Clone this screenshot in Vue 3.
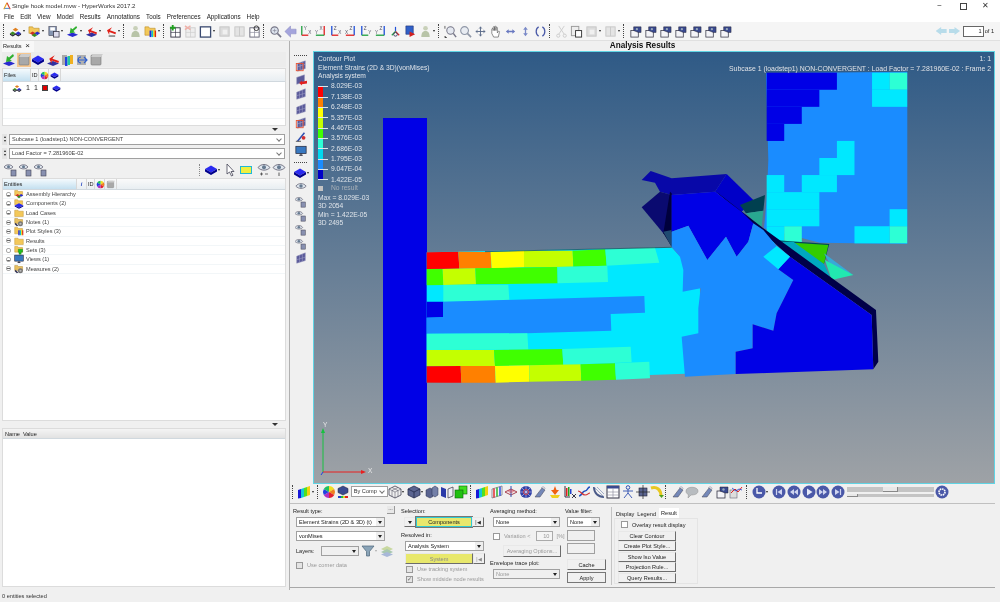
<script setup>
const menus = ['File', 'Edit', 'View', 'Model', 'Results', 'Annotations', 'Tools', 'Preferences', 'Applications', 'Help']

const GRN = '#20a040', RED = '#e02020', BLU = '#2050d8'

// axis view buttons: line colours, their labels, and whether the upright sits on the right
const ax = (up, flat, a, b, flip) => ({ up, flat, a, b, flip })

// '|' = grip dots, '^' = small dropdown caret, '_' = spacer, objects = axis buttons, other strings = symbol ids
const topTools = ['|', 'model', '^', 'folderm', '^', 'save', '^', 'greenarr', '^', 'redarr', '^', 'pptarr', '^', '|',
  'person', 'folderrb', '^', '|', 'plusw', 'crossw', 'squarew', '^', 'grey1', 'grey2', 'pagew', '|',
  'mag', 'leftarr',
  ax(GRN, RED, 'Y', 'X', false), ax(RED, GRN, 'X', 'Y', true), ax(BLU, RED, 'Z', 'X', false),
  ax(BLU, RED, 'Z', 'X', true), ax(BLU, GRN, 'Z', 'Y', false), ax(BLU, GRN, 'Z', 'Y', true),
  'triad', 'book', 'person', '^', '|',
  'magm', 'mag2', 'cross', 'hand', 'hsplit', 'vsplit', 'rotate', '|', 'scissors', 'paste', 'grey1', '^', 'grey2', '^', '|',
  'cam', 'cam', 'cam', 'cam', 'cam', 'cam', 'cam']

const sideTools = ['meshr', 'mesharr', 'mesh', 'mesh', 'meshr', 'stick', 'monitor']
const sideEyes = ['eye', 'eyebox', 'eyebox', 'eyebox', 'eyebox', 'mesh']

const bottomTools = ['|', 'rainbow', '^', '|', 'wheel', 'cubebar']
const bottomTools2 = ['wire', '^', 'solid', '^', 'solid2', 'half', 'greens', '|',
  'rainbow', 'rainframe', 'disk', 'net', 'stroke', 'ybar', 'chart', 'run', 'dish', 'table', 'figure', 'moveb', 'yellowarr', '|',
  'stroke', 'bubble', 'stroke', 'cam', 'graph', '_', '|', 'rbclock', '^', '_', 'rbfirst', 'rbback', 'rbplay', 'rbfwd', 'rblast']

const files = [{ icon: 'model', id: 1 }]

const leftIcons = ['greenarr', 'grey3', 'cube', 'redarr', 'rainbox', 'netbox', 'grey3']

const tree = [
  { label: 'Assembly Hierarchy', icon: 'folderm' },
  { label: 'Components (2)', icon: 'cubefolder' },
  { label: 'Load Cases', icon: 'folder' },
  { label: 'Notes (1)', icon: 'notes' },
  { label: 'Plot Styles (3)', icon: 'folderrb' },
  { label: 'Results', icon: 'folder' },
  { label: 'Sets (3)', icon: 'setsf' },
  { label: 'Views (1)', icon: 'monitor' },
  { label: 'Measures (2)', icon: 'notes' }
]

const legendLabels = ['8.029E-03', '7.138E-03', '6.248E-03', '5.357E-03', '4.467E-03', '3.576E-03', '2.686E-03', '1.795E-03', '9.047E-04', '1.422E-05']
const legendColors = ['#ff0000', '#ff8000', '#ffff00', '#c4ff00', '#40ff00', '#2dffd5', '#00d8f0', '#1a8cff', '#0000c8']

const R = '#ff0000', O = '#ff8000', Y = '#ffff00', L = '#c4ff00', G = '#40ff00', A = '#2dffd5', C = '#00e8ff', B = '#1a8cff', D = '#0000e6'

// hook shank, coordinates read off a 3x crop at (400,160)
const shank = [
  [C, '80,277 815,262 850,300 900,380 900,640 80,668'],
  [R, '80,277 175,275 178,326 80,327'],
  [O, '175,275 272,276 275,325 178,326'],
  [Y, '272,276 372,272 372,322 275,325'],
  [L, '372,272 518,272 520,320 372,322'],
  [G, '518,272 616,268 620,317 520,320'],
  [A, '616,268 765,263 778,308 620,317'],
  [G, '80,327 128,327 130,375 80,376'],
  [L, '128,327 226,325 228,373 130,375'],
  [G, '226,325 472,321 473,370 228,373'],
  [A, '472,321 622,317 624,366 473,370'],
  [A, '130,375 325,374 328,421 130,425'],
  [D, '80,425 130,425 130,472 80,473'],
  [B, '130,425 733,408 735,458 632,462 634,512 380,520 80,521 80,473 130,472'],
  [A, '80,521 382,520 385,569 80,570'],
  [L, '80,570 282,570 285,618 80,619'],
  [G, '282,570 487,567 490,615 285,618'],
  [A, '487,567 692,560 695,607 490,615'],
  [R, '80,619 182,618 184,668 80,668'],
  [O, '182,618 285,618 287,668 184,668'],
  [Y, '285,618 388,616 388,665 287,668'],
  [L, '388,616 542,613 544,662 388,665'],
  [G, '542,613 645,610 648,659 544,662'],
  [A, '645,610 748,605 750,655 648,659']
]

// hook tip and gussets, 3x crop at (620,60)
const tip = [
  ['#0808a8', '92,333 65,360 105,368 120,395 155,405 285,395 320,342 155,355'],
  ['#0000c8', '320,342 400,420 365,455 285,395'],
  ['#0a0a70', '120,395 65,442 130,520 155,515 155,405'],
  ['#00003c', '130,520 155,560 155,400 150,395'],
  ['#1f4a70', '130,515 155,510 155,562'],
  ['#004050', '360,435 435,405 430,452 378,460'],
  ['#28a890', '378,460 430,452 425,500 415,497'],
  ['#004858', '460,540 628,552 612,612 530,570'],
  ['#33cc00', '520,548 625,555 612,612 545,570'],
  ['#00a8c0', '480,545 520,545 612,612 635,660 560,610'],
  ['#38a8d8', '612,580 700,645 635,622'],
  ['#22e8b0', '615,600 700,645 635,660'],
  ['#000048', '285,392 430,505 768,750 775,905 760,928 755,765 510,590'],
  [D, '155,405 285,395 365,455 400,490 385,545 350,590 318,530 262,600 205,497 155,515'],
  [B, '155,515 205,497 262,600 318,530 350,590 385,545 400,490 430,510 470,558 510,590 475,628 520,660 470,760 460,812 398,793 398,865 347,875 347,942 195,950 185,830 235,820 235,745 242,685 188,695 190,630 180,590 155,560'],
  [D, '510,590 475,628 520,660 470,760 460,812 398,793 398,865 347,875 347,942 760,928 755,765'],
  [C, '470,558 430,590 475,628 510,590']
]

// stepped colours of the flat plate: [column, row, span, colour]
const plateCells = [
  [0, 0, 4, D], [0, 1, 3, D], [0, 2, 2, D], [0, 3, 1, D],
  [6, 0, 1, C], [7, 0, 1, A], [6, 1, 2, C],
  [4, 4, 1, C], [3, 5, 2, C], [2, 6, 2, C], [0, 6, 1, C],
  [0, 7, 3, C], [0, 8, 3, C], [0, 9, 1, C], [1, 9, 1, A],
  [7, 8, 1, C], [5, 9, 2, C], [7, 9, 1, A]
]
</script>

<template>
  <div class="app">
    <!-- icon sheet -->
    <svg class="sheet" aria-hidden="true">
      <symbol id="cube" viewBox="0 0 14 14"><path d="M7 2.500 13 6 7 9.500 1 6Z" fill="#2a2af0"/><path d="M1 6v2.500L7 12l6-3.500V6L7 9.500Z" fill="#00008c"/></symbol>
      <symbol id="model" viewBox="0 0 14 14"><path d="M7 3 10 5 7 7 4 5Z" fill="#e08020"/><path d="M4 7 7 9 4 11 1 9Z" fill="#3a8a20"/><path d="M10 7 13 9 10 11 7 9Z" fill="#2a2ad0"/><path d="M1 9v1.500L4 12.500l3-2 3 2 3-2V9L10 11 7 9 4 11Z" fill="#223"/></symbol>
      <symbol id="folder" viewBox="0 0 14 14"><path d="M1 3h4.500l1 1.500H13V12H1Z" fill="#f3c85a" stroke="#b98a20" stroke-width=".6"/></symbol>
      <symbol id="folderm" viewBox="0 0 14 14"><path d="M1 2h4l1 1.500h6V9H1Z" fill="#f3c85a" stroke="#b98a20" stroke-width=".6"/><path d="M5 7 8 9 5 11 2 9Z" fill="#d03020"/><path d="M10 7 13 9 10 11 7 9Z" fill="#2a2ad0"/><path d="M7 9 10 11 7 13 4 11Z" fill="#3a8a20"/></symbol>
      <symbol id="cubefolder" viewBox="0 0 14 14"><path d="M1 1h4l1 1.500h6V8H1Z" fill="#f3c85a" stroke="#b98a20" stroke-width=".6"/><path d="M7 6 13 9 7 12 1 9Z" fill="#2a2af0"/><path d="M1 9v1.500L7 13.500l6-3V9L7 12Z" fill="#00008c"/></symbol>
      <symbol id="setsf" viewBox="0 0 14 14"><path d="M1 2h4l1 1.500h6V10H1Z" fill="#f3c85a" stroke="#b98a20" stroke-width=".6"/><path d="M6 6h6v4H10v3H7v-3H6Z" fill="#20c020" stroke="#0a700a" stroke-width=".5"/></symbol>
      <symbol id="notes" viewBox="0 0 14 14"><path d="M1 2h4l1 1.500h6V9H1Z" fill="#e8c060" stroke="#a88020" stroke-width=".6"/><circle cx="9" cy="9.500" r="3.500" fill="#777"/><circle cx="9" cy="9.500" r="1.500" fill="#bbb"/><path d="M2 8l4 4-2 1-3-3Z" fill="#335"/></symbol>
      <symbol id="save" viewBox="0 0 14 14"><rect x="2" y="1.500" width="8" height="10" fill="#8494b0" stroke="#445" stroke-width=".6"/><rect x="3.500" y="2.500" width="5" height="3.500" fill="#fff"/><rect x="7" y="7" width="6" height="6" fill="#dde" stroke="#334" stroke-width=".8"/></symbol>
      <symbol id="greenarr" viewBox="0 0 14 14"><path d="M7 8 13 10.500 7 13 1 10.500Z" fill="#2a2ad0"/><path d="M11 1 7 4.500 5 3 4 9l6-1-2-1.500L12 3Z" fill="#30b030"/></symbol>
      <symbol id="redarr" viewBox="0 0 14 14"><path d="M7 8 13 10.500 7 13 1 10.500Z" fill="#3030a0"/><path d="M3 7 7 2l-1 4h7V8H6L7 11Z" fill="#e02018" transform="rotate(20 7 7)"/></symbol>
      <symbol id="pptarr" viewBox="0 0 14 14"><path d="M3 7 7 2l-1 4h7V8H6L7 11Z" fill="#e02018" transform="rotate(20 7 7)"/><rect x="5" y="11" width="7" height="1.800" fill="#888"/></symbol>
      <symbol id="person" viewBox="0 0 14 14"><circle cx="7" cy="3.500" r="2.500" fill="#c8d0b8"/><path d="M2.500 13c0-5 2-6.500 4.500-6.500S11.500 8 11.500 13Z" fill="#b8c4a8"/></symbol>
      <symbol id="folderrb" viewBox="0 0 14 14"><path d="M1 2h4l1 1.500h6V11H1Z" fill="#f3c85a" stroke="#b98a20" stroke-width=".6"/><rect x="6" y="6" width="2" height="7" fill="#2222e0"/><rect x="8" y="6" width="2" height="7" fill="#10c0d0"/><rect x="10" y="6" width="1.500" height="7" fill="#f0e020"/><rect x="11.500" y="6" width="1.500" height="7" fill="#e02010"/></symbol>
      <symbol id="plusw" viewBox="0 0 14 14"><rect x="2" y="3" width="10" height="10" fill="#fff" stroke="#334" stroke-width="1"/><path d="M7 3v10M2 8h10" stroke="#334" stroke-width=".7"/><path d="M4 0v6M1 3h6" stroke="#20a020" stroke-width="2"/></symbol>
      <symbol id="crossw" viewBox="0 0 14 14"><rect x="2" y="3" width="10" height="10" fill="#eee" stroke="#ccc" stroke-width="1"/><path d="M7 3v10M2 8h10" stroke="#ccc" stroke-width=".7"/><path d="M1 1l6 4M7 1 1 5" stroke="#f0b0a8" stroke-width="1.500"/></symbol>
      <symbol id="squarew" viewBox="0 0 14 14"><rect x="1.500" y="2" width="11" height="11" fill="#fff" stroke="#3a4a70" stroke-width="1.400"/></symbol>
      <symbol id="grey1" viewBox="0 0 14 14"><rect x="2" y="2" width="10" height="10" fill="#dcdcdc" stroke="#c4c4c4"/><rect x="5" y="5" width="5" height="5" fill="#f0f0f0"/></symbol>
      <symbol id="grey2" viewBox="0 0 14 14"><rect x="2" y="2" width="10" height="10" fill="#e4e4e4" stroke="#c8c8c8"/><path d="M7 2v10" stroke="#c8c8c8"/></symbol>
      <symbol id="grey3" viewBox="0 0 14 14"><rect x="2" y="2" width="10" height="10" rx="1" fill="#a8a8a8" stroke="#777" stroke-width=".6"/><path d="M2 4 4 1h10l-2 3Z" fill="#ccc"/></symbol>
      <symbol id="pagew" viewBox="0 0 14 14"><rect x="2" y="3" width="10" height="10" fill="#fff" stroke="#667" stroke-width="1"/><path d="M7 3v10M2 8h10" stroke="#889" stroke-width=".7"/><circle cx="9" cy="3.500" r="2.500" fill="none" stroke="#333" stroke-width="1"/></symbol>
      <symbol id="mag" viewBox="0 0 14 14"><circle cx="6" cy="6" r="4" fill="#dde4ee" stroke="#778" stroke-width="1.200"/><path d="M9 9l4 4" stroke="#778" stroke-width="1.800"/><path d="M4 6h4M6 4v4" stroke="#889" stroke-width=".7"/></symbol>
      <symbol id="magm" viewBox="0 0 14 14"><circle cx="7" cy="6" r="4" fill="#e4e8f0" stroke="#778" stroke-width="1.100"/><path d="M10 9l3 4" stroke="#778" stroke-width="1.600"/><path d="M1 1v3M1 12v1.500H3" stroke="#333" stroke-width=".8"/></symbol>
      <symbol id="mag2" viewBox="0 0 14 14"><circle cx="6" cy="6" r="4.200" fill="#e8ecf2" stroke="#9098a8" stroke-width="1.200"/><path d="M9 9l4 4" stroke="#9098a8" stroke-width="1.800"/></symbol>
      <symbol id="leftarr" viewBox="0 0 14 14"><path d="M7 1 1 7l6 6V9.500h6v-5H7Z" fill="#a4a4dc" stroke="#8c8cc4" stroke-width=".6"/></symbol>
      <symbol id="triad" viewBox="0 0 14 14"><path d="M7 7V2" stroke="#2050d8" stroke-width="1.300"/><path d="M7 7l4 4" stroke="#e02020" stroke-width="1.300"/><path d="M7 7l-4 4" stroke="#20a040" stroke-width="1.300"/><circle cx="7" cy="10" r="2" fill="none" stroke="#446"/></symbol>
      <symbol id="book" viewBox="0 0 14 14"><path d="M2 1h8v9H2Z" fill="#3060c8" stroke="#203070" stroke-width=".6"/><path d="M6 7l6 3-6 3Z" fill="#d02020"/></symbol>
      <symbol id="cross" viewBox="0 0 14 14"><path d="M7 2v10M2 7h10" stroke="#5a6a88" stroke-width="1"/><path d="M5.500 4 7 2 8.500 4M5.500 10 7 12l1.500-2M4 5.500 2 7l2 1.500M10 5.500 12 7l-2 1.500" fill="none" stroke="#5a6a88" stroke-width=".8"/></symbol>
      <symbol id="hand" viewBox="0 0 14 14"><path d="M3 7V4.500c0-1 1.500-1 1.500 0V6V2.500c0-1 1.500-1 1.500 0V6V2c0-1 1.500-1 1.500 0v4V3c0-1 1.500-1 1.500 0v5.500l1-1.500c.6-.8 1.800 0 1.200.8L10 13H5L3 9Z" fill="#fff" stroke="#555" stroke-width=".7"/></symbol>
      <symbol id="hsplit" viewBox="0 0 14 14"><path d="M2 7 5 4.500v1.800h4V4.500L12 7 9 9.500V7.700H5v1.800Z" fill="#6878c0"/></symbol>
      <symbol id="vsplit" viewBox="0 0 14 14"><path d="M7 2 9.500 5H7.700v4h1.800L7 12 4.500 9h1.800V5H4.500Z" fill="#7a8ac8"/></symbol>
      <symbol id="rotate" viewBox="0 0 14 14"><path d="M5 2C1.500 4 1.500 10 5 12M9 2c3.500 2 3.500 8 0 10" fill="none" stroke="#4a5aa8" stroke-width="1.400"/></symbol>
      <symbol id="scissors" viewBox="0 0 14 14"><path d="M4 1l6 9M10 1 4 10" stroke="#ccc" stroke-width="1"/><circle cx="3.500" cy="11.500" r="1.700" fill="none" stroke="#ccc"/><circle cx="10.500" cy="11.500" r="1.700" fill="none" stroke="#ccc"/></symbol>
      <symbol id="paste" viewBox="0 0 14 14"><rect x="1.500" y="1.500" width="8" height="10" fill="#eee" stroke="#999"/><rect x="6" y="6" width="6.500" height="7" fill="#fff" stroke="#333"/></symbol>
      <symbol id="cam" viewBox="0 0 14 14"><rect x="2" y="6" width="8" height="7" fill="#f4f4f8" stroke="#334" stroke-width=".8"/><path d="M5 6V2h8v6h-3Z" fill="#3a4a90" stroke="#223" stroke-width=".5"/><circle cx="8.500" cy="4.500" r="1.200" fill="#9ab"/></symbol>
      <symbol id="mesh" viewBox="0 0 14 14"><path d="M2 5 12 1v9L2 13Z" fill="#5a5a9a" stroke="#9090b8" stroke-width=".6"/><path d="M5.300 3.700v8.500M8.600 2.400v8.600M2 9l10-3" stroke="#b0b0d0" stroke-width=".5"/></symbol>
      <symbol id="meshr" viewBox="0 0 14 14"><path d="M3 4 12 1v9l-9 3Z" fill="#5a5a9a" stroke="#9090b8" stroke-width=".6"/><path d="M6 3v9M9 2v9M3 8l9-3" stroke="#c0c0d8" stroke-width=".5"/><rect x="1.500" y="4" width="8" height="8.500" fill="none" stroke="#e85030" stroke-width="1"/></symbol>
      <symbol id="mesharr" viewBox="0 0 14 14"><path d="M2 4 11 1v8l-9 3Z" fill="#5a5a9a" stroke="#9090b8" stroke-width=".6"/><path d="M14 8 8 9V7.500L5 10.500l3 3V12l6-1Z" fill="#e02020"/></symbol>
      <symbol id="stick" viewBox="0 0 14 14"><path d="M3 12 11 2" stroke="#3050b0" stroke-width="1.800"/><circle cx="10" cy="8" r="2.200" fill="#d03030"/><path d="M1 12h6" stroke="#444"/></symbol>
      <symbol id="monitor" viewBox="0 0 14 14"><rect x="1" y="1.500" width="12" height="8.500" fill="#3878c0" stroke="#223" stroke-width=".8"/><path d="M5 12h4M7 10v2" stroke="#223" stroke-width="1.200"/></symbol>
      <symbol id="eye" viewBox="0 0 14 14"><path d="M1 6c3-4 9-4 12 0-3 3.500-9 3.500-12 0Z" fill="#dfe6ee" stroke="#667" stroke-width=".9"/><circle cx="7" cy="5.800" r="2" fill="#667a90"/></symbol>
      <symbol id="eyepm" viewBox="0 0 14 14"><path d="M1 4.500c3-4 9-4 12 0-3 3.500-9 3.500-12 0Z" fill="#dfe6ee" stroke="#667" stroke-width=".9"/><circle cx="7" cy="4.300" r="2" fill="#667a90"/><path d="M3 11h3M4.500 9.500v3M8 11h3" stroke="#333" stroke-width=".7"/></symbol>
      <symbol id="eyeup" viewBox="0 0 14 14"><path d="M1 4.500c3-4 9-4 12 0-3 3.500-9 3.500-12 0Z" fill="#dfe6ee" stroke="#667" stroke-width=".9"/><circle cx="7" cy="4.300" r="2" fill="#667a90"/><path d="M7 9.500v3.500" stroke="#333" stroke-width=".8"/></symbol>
      <symbol id="eyebox" viewBox="0 0 14 14"><path d="M0 4c2-3 7-3 9 0-2 2.500-7 2.500-9 0Z" fill="#dfe6ee" stroke="#667" stroke-width=".8"/><circle cx="4.500" cy="3.800" r="1.500" fill="#667a90"/><rect x="7" y="7" width="5" height="6" fill="#8890b0" stroke="#445" stroke-width=".6"/></symbol>
      <symbol id="rainbow" viewBox="0 0 14 14"><path d="M1 5 4 4v9l-3 .5Z" fill="#1818d8"/><path d="M4 4 7 3v9l-3 1Z" fill="#10c8d8"/><path d="M7 3 10 2v9l-3 1Z" fill="#50e020"/><path d="M10 2 13 1v9l-3 1Z" fill="#f0d010"/></symbol>
      <symbol id="rainframe" viewBox="0 0 14 14"><path d="M2 4 12 1v9L2 13Z" fill="#f4f4f8" stroke="#556" stroke-width=".6"/><path d="M4 3.500v9" stroke="#e02020" stroke-width="1.400"/><path d="M7 2.600v9" stroke="#20b020" stroke-width="1.400"/><path d="M10 1.700v9" stroke="#2040e0" stroke-width="1.400"/></symbol>
      <symbol id="wheel" viewBox="0 0 14 14"><path d="M7 7V1a6 6 0 0 1 5.200 3Z" fill="#f0e020"/><path d="M7 7l5.200-3a6 6 0 0 1 0 6Z" fill="#f08020"/><path d="M7 7l5.200 3A6 6 0 0 1 7 13Z" fill="#e02030"/><path d="M7 7v6a6 6 0 0 1-5.200-3Z" fill="#b030c0"/><path d="M7 7 1.800 10a6 6 0 0 1 0-6Z" fill="#2040e0"/><path d="M7 7 1.800 4A6 6 0 0 1 7 1Z" fill="#20c060"/></symbol>
      <symbol id="cubebar" viewBox="0 0 14 14"><path d="M7 1 12 3.500v4L7 10 2 7.500v-4Z" fill="#3a4a90" stroke="#223" stroke-width=".5"/><rect x="2" y="11" width="3" height="2" fill="#2040d0"/><rect x="5" y="11" width="2" height="2" fill="#20c040"/><rect x="7" y="11" width="2" height="2" fill="#e0d020"/><rect x="9" y="11" width="3" height="2" fill="#e02020"/></symbol>
      <symbol id="wire" viewBox="0 0 14 14"><path d="M7 1 13 4v6l-6 3-6-3V4Z" fill="#f0f0f0" stroke="#445" stroke-width=".8"/><path d="M1 4l6 3 6-3M7 7v6M4 2.500 10 5.500M10 2.500 4 5.500M4 5.500v6M10 5.500v6" stroke="#445" stroke-width=".5" fill="none"/></symbol>
      <symbol id="solid" viewBox="0 0 14 14"><path d="M7 1 13 4v6l-6 3-6-3V4Z" fill="#5a6490" stroke="#2a3050" stroke-width=".8"/><path d="M1 4l6 3 6-3M7 7v6" stroke="#22284a" stroke-width=".8" fill="none"/></symbol>
      <symbol id="solid2" viewBox="0 0 14 14"><path d="M1 5 5 3l3 1.500v7L5 13 1 11Z" fill="#5a6490" stroke="#2a3050" stroke-width=".5"/><path d="M7 3 10 1l3 2v7l-3 2-3-2Z" fill="#7480a8" stroke="#2a3050" stroke-width=".5"/></symbol>
      <symbol id="half" viewBox="0 0 14 14"><path d="M1 2 6 4v9L1 11Z" fill="#2a3aa8"/><path d="M8 4 13 2v9l-5 2Z" fill="#f0f0f8" stroke="#334" stroke-width=".7"/></symbol>
      <symbol id="greens" viewBox="0 0 14 14"><rect x="5" y="1" width="8" height="8" fill="#40e020" stroke="#106010" stroke-width=".6"/><rect x="1" y="5" width="8" height="8" fill="#20c010" stroke="#106010" stroke-width=".6"/></symbol>
      <symbol id="disk" viewBox="0 0 14 14"><path d="M1 7 7 4l6 3-6 3Z" fill="none" stroke="#a03040" stroke-width=".9"/><path d="M7 1v11" stroke="#3050b0" stroke-width="1"/><path d="M3 6 7 4 11 6 7 8.500Z" fill="#d04050" opacity=".5"/></symbol>
      <symbol id="net" viewBox="0 0 14 14"><circle cx="7" cy="7" r="6" fill="#3040a8"/><path d="M7 1v12M1 7h12M3 3l8 8M11 3l-8 8" stroke="#e8e8ff" stroke-width=".5"/><circle cx="7" cy="7" r="2.500" fill="none" stroke="#e04040" stroke-width=".9"/></symbol>
      <symbol id="stroke" viewBox="0 0 14 14"><path d="M2 12 9 3l3 2-5 7Z" fill="#7488b8" stroke="#445" stroke-width=".5"/><path d="M8 3c2-2 4-1 4 1" fill="none" stroke="#aab" /></symbol>
      <symbol id="ybar" viewBox="0 0 14 14"><path d="M7 1l1.500 4H11L7 10 3 5h2.500Z" fill="#f06010"/><path d="M2 10h10l-2 3H4Z" fill="#f0d020"/></symbol>
      <symbol id="chart" viewBox="0 0 14 14"><path d="M2 1v11h5" stroke="#334" fill="none"/><rect x="3" y="3" width="1.500" height="8" fill="#e02020"/><rect x="5" y="2" width="1.500" height="9" fill="#20a020"/><rect x="7" y="4" width="1.500" height="5" fill="#2040d0"/><path d="M9 9l4 4M13 9l-4 4" stroke="#334"/></symbol>
      <symbol id="run" viewBox="0 0 14 14"><path d="M2 11c3 0 3-5 6-5s2-4 5-4" fill="none" stroke="#2050c0" stroke-width="1.600"/><path d="M1 6c3 0 4 4 7 4s3-2 5-2" fill="none" stroke="#d03030" stroke-width="1.200"/></symbol>
      <symbol id="dish" viewBox="0 0 14 14"><path d="M2 2c0 6 4 10 10 10" fill="none" stroke="#4a5a88" stroke-width="2"/><path d="M2 2l10 10M5 2l7 7" stroke="#8090b8" stroke-width=".7"/></symbol>
      <symbol id="table" viewBox="0 0 14 14"><rect x="1" y="1" width="12" height="12" fill="#fff" stroke="#334"/><rect x="1" y="1" width="12" height="2.500" fill="#3a4a90"/><path d="M7 3.500V13M1 7h12M1 10h12" stroke="#889" stroke-width=".6"/></symbol>
      <symbol id="figure" viewBox="0 0 14 14"><circle cx="7" cy="2.500" r="1.800" fill="none" stroke="#3050b0"/><path d="M7 4.500V8L3 13M7 8l4 5M2 6h10" fill="none" stroke="#3050b0" stroke-width=".9"/></symbol>
      <symbol id="moveb" viewBox="0 0 14 14"><rect x="3" y="3" width="8" height="8" fill="#5a6490" stroke="#223" stroke-width=".6"/><path d="M7 0v14M0 7h14" stroke="#222" stroke-width=".7"/></symbol>
      <symbol id="yellowarr" viewBox="0 0 14 14"><path d="M1 3c6-2 10 2 10 8" fill="none" stroke="#e8c820" stroke-width="3"/><path d="M9 10h5l-2.500 3Z" fill="#50a020"/></symbol>
      <symbol id="bubble" viewBox="0 0 14 14"><path d="M1 6c0-5 12-5 12 0 0 4-6 4-7 4l-3 3 .5-3.500C2 9 1 8 1 6Z" fill="#b8bcc0" stroke="#999" stroke-width=".6"/></symbol>
      <symbol id="graph" viewBox="0 0 14 14"><rect x="1" y="5" width="7" height="8" fill="#ddd" stroke="#667" stroke-width=".6"/><path d="M2 8l4-4 3 3 4-5" fill="none" stroke="#e02020"/><path d="M3 3l4 3 3-2 3 1" fill="none" stroke="#2040d0" stroke-width=".8"/></symbol>
      <symbol id="rbclock" viewBox="0 0 14 14"><circle cx="7" cy="7" r="6.500" fill="#4a58a8"/><path d="M5 3v5h5" fill="none" stroke="#fff" stroke-width="1.300"/></symbol>
      <symbol id="rbfirst" viewBox="0 0 14 14"><circle cx="7" cy="7" r="6.500" fill="#4a58a8"/><path d="M4.500 4v6" stroke="#cfd4f0" stroke-width="1.200"/><path d="M10 4v6L5.500 7Z" fill="#cfd4f0"/></symbol>
      <symbol id="rbback" viewBox="0 0 14 14"><circle cx="7" cy="7" r="6.500" fill="#4a58a8"/><path d="M7 4v6L3 7ZM11 4v6L7 7Z" fill="#cfd4f0"/></symbol>
      <symbol id="rbplay" viewBox="0 0 14 14"><circle cx="7" cy="7" r="6.500" fill="#4a58a8"/><path d="M5 3.500v7l5.500-3.500Z" fill="#e4e8f8"/></symbol>
      <symbol id="rbfwd" viewBox="0 0 14 14"><circle cx="7" cy="7" r="6.500" fill="#4a58a8"/><path d="M3 4v6l4-3ZM7 4v6l4-3Z" fill="#cfd4f0"/></symbol>
      <symbol id="rblast" viewBox="0 0 14 14"><circle cx="7" cy="7" r="6.500" fill="#4a58a8"/><path d="M9.500 4v6" stroke="#cfd4f0" stroke-width="1.200"/><path d="M4 4v6l4.500-3Z" fill="#cfd4f0"/></symbol>
      <symbol id="rbgear" viewBox="0 0 14 14"><circle cx="7" cy="7" r="6.500" fill="#4a58a8"/><circle cx="7" cy="7" r="3" fill="none" stroke="#fff" stroke-width="1.600" stroke-dasharray="1.600 .7"/></symbol>
      <symbol id="rainbox" viewBox="0 0 14 14"><rect x="2" y="2" width="5" height="10" fill="#a8a8a8"/><rect x="5" y="4" width="2.500" height="9" fill="#2040e0"/><rect x="7.500" y="3" width="2.500" height="9" fill="#20c8a0"/><rect x="10" y="2" width="3" height="9" fill="#f0b020"/></symbol>
      <symbol id="netbox" viewBox="0 0 14 14"><rect x="2" y="2" width="9" height="10" fill="#b0b0b0"/><path d="M3 7h9M9 4l3 3-3 3M6 10a3 3 0 0 1 0-6" fill="none" stroke="#3060d0" stroke-width="1.200"/></symbol>
      <symbol id="funnel" viewBox="0 0 14 14"><path d="M1 2h12L8.500 7.500V12h-3V7.500Z" fill="#8aa4b8" stroke="#4a6478" stroke-width=".7"/></symbol>
      <symbol id="stack" viewBox="0 0 14 14"><path d="M7 2 13 5 7 8 1 5Z" fill="#c8d8a0"/><path d="M7 5 13 8 7 11 1 8Z" fill="#a8c8b0"/><path d="M7 8 13 10.500 7 13 1 10.500Z" fill="#a8b8d8"/></symbol>
    </svg>

    <header class="titlebar">
      <svg class="logo" viewBox="0 0 10 10"><path d="M5 1 1 9" stroke="#e8a020" stroke-width="1.400"/><path d="M5 1 9 9" stroke="#d84030" stroke-width="1.400"/><path d="M2 8h6" stroke="#2070c0"/></svg>
      <span class="title">Single hook model.mvw - HyperWorks 2017.2</span>
      <div class="winbtns">
        <span class="wb">−</span>
        <span class="wb restore"></span>
        <span class="wb">✕</span>
      </div>
    </header>

    <nav class="menubar">
      <span v-for="m in menus" :key="m">{{ m }}</span>
    </nav>

    <div class="toolbar">
      <template v-for="(t, i) in topTools" :key="i">
        <span v-if="t === '|'" class="dots"></span>
        <span v-else-if="t === '^'" class="caret"></span>
        <svg v-else-if="t.up" class="ic axisbtn" viewBox="0 0 14 14">
          <path :d="t.flip ? 'M11 1v10' : 'M3 1v10'" :stroke="t.up" stroke-width="1.400" />
          <path :d="t.flip ? 'M2 11h9' : 'M3 11h7'" :stroke="t.flat" stroke-width="1.400" />
          <text :x="t.flip ? 6 : 5" y="5.500">{{ t.a }}</text>
          <text :x="t.flip ? 1 : 10" y="9.500">{{ t.b }}</text>
        </svg>
        <svg v-else class="ic"><use :href="'#' + t" /></svg>
      </template>
      <div class="pager">
        <span class="pgarrow back"></span>
        <span class="pgarrow"></span>
        <span class="pgbox">1</span>
        <span>of 1</span>
      </div>
    </div>

    <main class="main">
      <!-- left browser -->
      <aside class="left">
        <div class="tabrow"><span class="tab">Results <b>×</b></span></div>
        <div class="licons">
          <span v-for="(ic, i) in leftIcons" :key="i" class="licon" :class="{ on: i === 1 }">
            <svg class="ic"><use :href="'#' + ic" /></svg>
          </span>
        </div>
        <div class="files">
          <div class="thead">
            <span class="th sorted w28">Files</span>
            <span class="th w8">ID</span>
            <span class="th w9"><svg class="ic9"><use href="#wheel" /></svg></span>
            <span class="th w11"><svg class="ic9"><use href="#cube" /></svg></span>
            <span class="th fill"></span>
          </div>
          <div v-for="f in files" :key="f.id" class="frow">
            <svg class="ic10"><use :href="'#' + f.icon" /></svg>
            <span>1</span><span>1</span>
            <span class="redsq"></span>
            <svg class="ic9"><use href="#cube" /></svg>
          </div>
        </div>
        <div class="grip"></div>
        <div class="comborow">
          <span class="spin"><i></i><i class="dn"></i></span>
          <div class="combo wide">Subcase 1 (loadstep1) NON-CONVERGENT<span class="chev"></span></div>
        </div>
        <div class="comborow">
          <span class="spin"><i></i><i class="dn"></i></span>
          <div class="combo wide">Load Factor = 7.281960E-02<span class="chev"></span></div>
        </div>
        <div class="eyerow">
          <svg class="ic"><use href="#eyebox" /></svg>
          <svg class="ic"><use href="#eyebox" /></svg>
          <svg class="ic"><use href="#eyebox" /></svg>
          <span class="vsep"></span>
          <svg class="ic"><use href="#cube" /></svg>
          <span class="caret"></span>
          <span class="cursor">
            <svg viewBox="0 0 10 14"><path d="M2 1v10l2.500-2 2 4 1.500-.8-2-3.700H9Z" fill="#fff" stroke="#445" stroke-width=".8"/></svg>
          </span>
          <span class="fillbox"></span>
          <svg class="ic"><use href="#eyepm" /></svg>
          <svg class="ic"><use href="#eyeup" /></svg>
        </div>
        <div class="entities">
          <div class="thead">
            <span class="th sorted w75">Entities</span>
            <span class="th w10 info">i</span>
            <span class="th w8">ID</span>
            <span class="th w9"><svg class="ic9"><use href="#wheel" /></svg></span>
            <span class="th w11"><svg class="ic9"><use href="#grey3" /></svg></span>
            <span class="th fill"></span>
          </div>
          <div v-for="t in tree" :key="t.label" class="trow">
            <span class="expander"></span>
            <svg class="ic10"><use :href="'#' + t.icon" /></svg>
            <span>{{ t.label }}</span>
          </div>
        </div>
        <div class="grip"></div>
        <div class="props">
          <div class="thead short">
            <span class="th">Name</span>
            <span class="th">Value</span>
            <span class="th fill"></span>
          </div>
        </div>
      </aside>

      <!-- graphics side -->
      <section class="right">
        <h1 class="heading">Analysis Results</h1>
        <div class="stage">
          <div class="strip">
            <span class="hdots"></span>
            <svg v-for="(ic, i) in sideTools" :key="i" class="ic"><use :href="'#' + ic" /></svg>
            <span class="hdots"></span>
            <div class="stripcube"><svg class="ic"><use href="#cube" /></svg><span class="caret"></span></div>
            <svg v-for="(ic, i) in sideEyes" :key="'e' + i" class="ic"><use :href="'#' + ic" /></svg>
          </div>

          <div class="viewport">
            <svg class="model" viewBox="314 52 680 431">
              <rect x="383" y="118" width="44" height="346" fill="#0000e6" />
              <!-- flat plate behind the hook -->
              <g transform="translate(620 60) scale(.3333)">
                <path d="M438 40 862 35V552L600 548 432 505 440 420 445 300Z" fill="#1a8cff" />
                <rect
                  v-for="(c, i) in plateCells" :key="i"
                  :x="440 + c[0] * 52.7" :y="38 + c[1] * 51.2"
                  :width="c[2] * 52.7" height="51.3" :fill="c[3]"
                />
              </g>
              <g transform="translate(620 60) scale(.3333)">
                <polygon v-for="(p, i) in tip.slice(0, 12)" :key="i" :points="p[1]" :fill="p[0]" />
              </g>
              <g transform="translate(400 160) scale(.3333)">
                <polygon v-for="(p, i) in shank" :key="i" :points="p[1]" :fill="p[0]" />
                <path d="M255 275 815 262" stroke="#2a3a40" stroke-width="2" />
              </g>
              <g transform="translate(620 60) scale(.3333)">
                <polygon v-for="(p, i) in tip.slice(12)" :key="i" :points="p[1]" :fill="p[0]" />
              </g>
              <!-- triad -->
              <path d="M323 472V431" stroke="#18c040" />
              <path d="M323 472H363" stroke="#e82020" />
              <path d="M323 472l-2 3" stroke="#2040e0" />
              <path d="M321 433 323 428 325 433Z" fill="#18c040" />
              <path d="M361 470 366 472 361 474Z" fill="#e82020" />
            </svg>

            <div class="overlay-left">
              <div>Contour Plot</div>
              <div>Element Strains (2D &amp; 3D)(vonMises)</div>
              <div>Analysis system</div>
              <div class="legend">
                <div class="bar">
                  <span v-for="c in legendColors" :key="c" :style="{ background: c }"></span>
                </div>
                <div class="ticks">
                  <div v-for="l in legendLabels" :key="l" class="tick"><i></i>{{ l }}</div>
                </div>
              </div>
              <div class="noresult"><span></span>No result</div>
              <div class="stats">
                <div>Max = 8.029E-03</div>
                <div>3D 2054</div>
                <div>Min = 1.422E-05</div>
                <div>3D 2495</div>
              </div>
            </div>

            <div class="overlay-right">
              <div>1: 1</div>
              <div>Subcase 1 (loadstep1) NON-CONVERGENT : Load Factor = 7.281960E-02 : Frame 2</div>
            </div>

            <span class="axis y">Y</span>
            <span class="axis x">X</span>
          </div>
        </div>

        <div class="bottombar">
          <template v-for="(t, i) in bottomTools" :key="i">
            <span v-if="t === '|'" class="dots"></span>
            <span v-else-if="t === '^'" class="caret"></span>
            <svg v-else class="ic"><use :href="'#' + t" /></svg>
          </template>
          <div class="combo bycomp">By Comp<span class="chev"></span></div>
          <template v-for="(t, i) in bottomTools2" :key="'b' + i">
            <span v-if="t === '|'" class="dots"></span>
            <span v-else-if="t === '^'" class="caret"></span>
            <span v-else-if="t === '_'" class="spacer"></span>
            <svg v-else class="ic"><use :href="'#' + t" /></svg>
          </template>
          <div class="slider">
            <div class="track"><span class="thumb"></span></div>
            <div class="track thin"><span class="thumb small"></span></div>
          </div>
          <svg class="ic gear"><use href="#rbgear" /></svg>
        </div>

        <div class="panel">
          <div class="col col1">
            <div class="lblrow">
              <span class="lbl">Result type:</span>
              <span class="dotsbtn">...</span>
            </div>
            <div class="combo c89">Element Strains (2D &amp; 3D) (t)<span class="drop"></span></div>
            <div class="combo c89 m4">vonMises<span class="drop"></span></div>
            <div class="layers">
              <span>Layers:</span>
              <div class="combo off c38"><span class="drop"></span></div>
              <svg class="ic"><use href="#funnel" /></svg>
              <span class="caret grey"></span>
              <svg class="ic"><use href="#stack" /></svg>
            </div>
            <label class="check off"><i></i>Use corner data</label>
          </div>

          <div class="col col2">
            <span class="lbl">Selection:</span>
            <div class="selrow">
              <span class="btn sq11"><span class="drop solo"></span></span>
              <span class="btn yellow active">Components</span>
              <span class="btn sq11 skip">|◀</span>
            </div>
            <span class="lbl mt3">Resolved in:</span>
            <div class="combo c79">Analysis System<span class="drop"></span></div>
            <div class="selrow sys">
              <span class="btn yellow sysbtn">System</span>
              <span class="btn sq11 skip faded">|◀</span>
            </div>
            <label class="check off ind"><i></i>Use tracking system</label>
            <label class="check off ind"><i class="ticked">✓</i>Show midside node results</label>
          </div>

          <div class="col col3">
            <span class="lbl">Averaging method:</span>
            <div class="combo c66">None<span class="drop"></span></div>
            <div class="variation off">
              <label class="check"><i></i>Variation &lt;</label>
              <span class="num">10</span>
              <span>[%]</span>
            </div>
            <span class="btn optbtn off">Averaging Options...</span>
            <span class="lbl mt1">Envelope trace plot:</span>
            <div class="combo off c66">None<span class="drop"></span></div>
          </div>

          <div class="col col4">
            <span class="lbl">Value filter:</span>
            <div class="combo c33">None<span class="drop"></span></div>
            <span class="numbox"></span>
            <span class="numbox"></span>
            <span class="btn act">Cache</span>
            <span class="btn act apply">Apply</span>
          </div>

          <div class="col col5">
            <div class="tabs">
              <span>Display</span>
              <span>Legend</span>
              <span class="current">Result</span>
            </div>
            <div class="tabbody">
              <label class="check"><i></i>Overlay result display</label>
              <span class="btn rb">Clear Contour</span>
              <span class="btn rb">Create Plot Style...</span>
              <span class="btn rb">Show Iso Value</span>
              <span class="btn rb">Projection Rule...</span>
              <span class="btn rb">Query Results...</span>
            </div>
          </div>
        </div>
      </section>
    </main>

    <footer class="statusbar">0 entities selected</footer>
  </div>
</template>

<style>
html, body {
  margin: 0;
  background: #f0f0f0;
}
</style>

<style scoped>
.app {
  width: 1000px;
  height: 602px;
  display: flex;
  flex-direction: column;
  overflow: hidden;
  background: #f0f0f0;
  color: #222;
  font-family: "Liberation Sans", sans-serif;
  font-size: 5.6px;
  line-height: 8px;
  position: relative;
  filter: blur(0.35px);
}
.sheet {
  position: absolute;
  width: 0;
  height: 0;
}
.ic {
  width: 14px;
  height: 14px;
  margin: 0 0.5px;
  flex: none;
}
.ic9 {
  width: 9px;
  height: 9px;
  flex: none;
}
.ic10 {
  width: 10px;
  height: 10px;
  flex: none;
}
.axisbtn text {
  font-size: 5px;
  fill: #556;
}

/* title + menu */
.titlebar {
  height: 12px;
  background: #fff;
  display: flex;
  align-items: center;
  padding-left: 3px;
  flex: none;
}
.logo {
  width: 8px;
  height: 8px;
  margin-right: 1px;
}
.title {
  font-size: 6.1px;
  color: #333;
}
.winbtns {
  margin-left: auto;
  display: flex;
  margin-right: 3px;
}
.wb {
  width: 23px;
  text-align: center;
  font-size: 8px;
  color: #333;
}
.restore {
  position: relative;
}
.restore::after {
  content: "";
  position: absolute;
  left: 9px;
  top: 1px;
  width: 5px;
  height: 5px;
  border: 1px solid #444;
}
.menubar {
  height: 10px;
  background: #fff;
  display: flex;
  gap: 6px;
  padding-left: 4px;
  align-items: center;
  font-size: 6.3px;
  flex: none;
}
.toolbar {
  height: 18px;
  background: #f5f5f5;
  display: flex;
  align-items: center;
  padding-left: 2px;
  flex: none;
}
.toolbar .ic {
  width: 13px;
  height: 13px;
  margin: 0 1px;
}
.dots {
  width: 5px;
  height: 14px;
  border-left: 1px dotted #444;
  box-sizing: border-box;
  flex: none;
  margin-left: 1px;
}
.caret {
  width: 4px;
  height: 0;
  flex: none;
  position: relative;
}
.caret::after {
  content: "";
  position: absolute;
  left: 0;
  top: -1px;
  border: 1.5px solid transparent;
  border-top: 2px solid #222;
}
.caret.grey::after {
  border-top-color: #aaa;
}
.pager {
  margin-left: auto;
  margin-right: 6px;
  display: flex;
  align-items: center;
  gap: 2px;
  font-size: 5.6px;
}
.pgarrow {
  width: 11px;
  height: 8px;
  background: #b8dcea;
  clip-path: polygon(100% 25%, 50% 25%, 50% 0, 0 50%, 50% 100%, 50% 75%, 100% 75%);
  transform: scaleX(-1);
}
.pgarrow.back {
  transform: none;
}
.pgbox {
  width: 18px;
  height: 9px;
  line-height: 9px;
  background: #fff;
  border: 1px solid #666;
  text-align: right;
  padding-right: 1px;
  margin-left: 1px;
  margin-right: -1px;
}

/* layout */
.main {
  flex: 1;
  display: flex;
  min-height: 0;
  border-top: 1px solid #e0e0e0;
}
.left {
  width: 287px;
  flex: none;
  display: flex;
  flex-direction: column;
  padding: 0 1px 0 2px;
  box-sizing: border-box;
}
.right {
  flex: 1;
  min-width: 0;
  border-left: 1px solid #b0b0b0;
  margin-left: 2px;
  padding-right: 5px;
  display: flex;
  flex-direction: column;
}

/* left browser */
.tabrow {
  height: 11px;
  flex: none;
  display: flex;
}
.tab {
  padding: 1px 4px 0 1px;
  background: #f8f8f8;
}
.tab b {
  font-weight: normal;
  font-size: 8px;
  margin-left: 2px;
}
.licons {
  height: 15px;
  display: flex;
  align-items: center;
  background: #ececec;
  flex: none;
}
.licon {
  width: 14.5px;
  height: 14px;
  display: flex;
  justify-content: center;
}
.licon.on {
  background: #f8c890;
}
.files {
  height: 58px;
  flex: none;
  margin-top: 1px;
  border: 1px solid #dcdcdc;
  box-sizing: border-box;
  background: repeating-linear-gradient(#fff 0 9px, #f2f5f7 9px 10px);
}
.thead {
  height: 13px;
  display: flex;
  background: linear-gradient(#fafafa, #e8eef2);
  border-bottom: 1px solid #d0d8de;
  box-sizing: border-box;
}
.th {
  display: flex;
  align-items: center;
  border-right: 1px solid #d8d8d8;
  padding: 0 1px;
  box-sizing: border-box;
  flex: none;
}
.th.fill {
  flex: 1;
  border-right: 0;
}
.th.sorted {
  background: linear-gradient(#f4fafd, #c4e0f0);
}
.w28 { width: 28px; }
.w75 { width: 74px; }
.w8 { width: 8px; }
.w9 { width: 10px; }
.w10 { width: 10px; justify-content: center; }
.w11 { width: 12px; }
.info {
  color: #2040c0;
  font-style: italic;
  font-weight: bold;
}
.frow {
  height: 10px;
  margin-top: 1px;
  display: flex;
  align-items: center;
  gap: 4px;
  padding-left: 9px;
  font-size: 7px;
  background: #fff;
}
.redsq {
  width: 6px;
  height: 6px;
  background: #e00000;
  border: 1px solid #444;
  box-sizing: border-box;
}
.grip {
  height: 7px;
  flex: none;
  position: relative;
}
.grip::after {
  content: "";
  position: absolute;
  right: 8px;
  top: 2px;
  border: 3px solid transparent;
  border-top: 3px solid #333;
}
.comborow {
  display: flex;
  align-items: center;
  gap: 2px;
  height: 12px;
  margin-bottom: 2px;
  flex: none;
}
.spin {
  width: 5px;
  display: flex;
  flex-direction: column;
  gap: 2px;
  align-items: center;
  background: #e4e4e4;
  height: 11px;
  justify-content: center;
}
.spin i {
  border: 1.5px solid transparent;
  border-bottom: 2px solid #222;
  border-top: 0;
}
.spin i.dn {
  border-top: 2px solid #222;
  border-bottom: 0;
}
.combo {
  height: 10px;
  line-height: 8px;
  background: #fff;
  border: 1px solid #a0a0a0;
  box-sizing: border-box;
  padding-left: 2px;
  position: relative;
  white-space: nowrap;
  flex: none;
}
.combo.wide {
  flex: 1;
  height: 11px;
  line-height: 9px;
  margin-right: 1px;
  color: #444;
}
.chev {
  position: absolute;
  right: 3px;
  top: 2px;
  width: 3px;
  height: 3px;
  border-right: 1px solid #777;
  border-bottom: 1px solid #777;
  transform: rotate(45deg);
}
.eyerow {
  height: 17px;
  display: flex;
  align-items: center;
  padding-left: 1px;
  flex: none;
}
.vsep {
  margin-left: auto;
  height: 12px;
  border-left: 1px dotted #888;
  margin-right: 3px;
}
.cursor {
  width: 10px;
  height: 14px;
  margin: 0 3px;
}
.cursor svg {
  width: 100%;
  height: 100%;
}
.fillbox {
  width: 10px;
  height: 6px;
  background: #f0f040;
  border: 1px solid #20b8d8;
  margin: 0 4px 0 2px;
}
.entities {
  height: 243px;
  background: #fff;
  flex: none;
  border: 1px solid #dcdcdc;
  box-sizing: border-box;
}
.entities .thead {
  height: 11px;
}
.trow {
  height: 9.33px;
  display: flex;
  align-items: center;
  gap: 2.5px;
  padding-left: 3px;
  color: #444;
  border-bottom: 1px solid #f2f6f8;
  box-sizing: border-box;
}
.expander {
  width: 5px;
  height: 5px;
  border: 1px solid #aaa;
  border-radius: 2px;
  box-sizing: border-box;
  background: linear-gradient(transparent 1.5px, #666 1.5px 2.5px, transparent 2.5px);
  flex: none;
}
.props {
  flex: 1;
  background: #fff;
  margin-bottom: 3px;
  border: 1px solid #dcdcdc;
  box-sizing: border-box;
}
.thead.short {
  height: 10px;
  background: linear-gradient(#f4f4f4, #e2e2e2);
}
.thead.short .th {
  padding: 0 1px 0 2px;
  border-right: 0;
}

/* graphics */
.heading {
  margin: 0;
  height: 10px;
  font-size: 8.2px;
  line-height: 10px;
  font-weight: bold;
  text-align: center;
  flex: none;
  color: #111;
}
.stage {
  display: flex;
  height: 433px;
  flex: none;
}
.strip {
  width: 23px;
  display: flex;
  flex-direction: column;
  align-items: center;
  flex: none;
  padding-right: 2px;
  box-sizing: border-box;
}
.strip > .ic {
  width: 12px;
  height: 12px;
  margin: 1.1px 0;
}
.hdots {
  width: 13px;
  height: 5px;
  border-bottom: 1px dotted #444;
  margin-bottom: 3px;
  box-sizing: border-box;
  flex: none;
}
.stripcube {
  display: flex;
  align-items: center;
  width: 20px;
  margin-left: 3px;
}
.viewport {
  flex: 1;
  position: relative;
  border: 1px solid #60d4e4;
  background: linear-gradient(#2f5a86, #9ea2a6);
  overflow: hidden;
  color: #dfe4ea;
  font-size: 6.7px;
  line-height: 8.5px;
}
.model {
  position: absolute;
  inset: 0;
  width: 100%;
  height: 100%;
}
.overlay-left {
  position: absolute;
  left: 4px;
  top: 3px;
}
.overlay-right {
  position: absolute;
  right: 3px;
  top: 3px;
  text-align: right;
  font-size: 6.9px;
}
.overlay-right div:last-child {
  margin-top: 1px;
  text-shadow: 0 0 1px #33557a;
}
.legend {
  display: flex;
  margin-top: 1.7px;
  height: 102.3px;
}
.bar {
  width: 5px;
  margin-top: 4.8px;
  height: 93px;
  display: flex;
  flex-direction: column;
}
.bar span {
  flex: 1;
}
.ticks {
  display: flex;
  flex-direction: column;
  justify-content: space-between;
  height: 102.3px;
}
.tick {
  display: flex;
  align-items: center;
  margin-left: -5px;
  height: 9px;
}
.tick i {
  width: 10px;
  height: 1px;
  background: #dfe4ea;
  margin-right: 3px;
}
.noresult {
  display: flex;
  align-items: center;
  color: #a8b0b8;
  gap: 8px;
}
.noresult span {
  width: 5px;
  height: 5px;
  background: #c4c4c4;
}
.stats {
  margin-top: 1px;
}
.axis {
  position: absolute;
  color: #e8e8e8;
  font-size: 6.5px;
}
.axis.y {
  left: 9px;
  top: 369px;
}
.axis.x {
  left: 54px;
  top: 415px;
}

/* bottom toolbar */
.bottombar {
  height: 20px;
  display: flex;
  align-items: center;
  padding: 0 0 4px 1px;
  flex: none;
  border-bottom: 1px solid #c0c0c0;
  box-sizing: border-box;
}
.bottombar .ic {
  margin: 0 0.3px;
}
.spacer {
  width: 2px;
  flex: none;
}
.bycomp {
  width: 37px;
  height: 11px;
  line-height: 9px;
  color: #333;
}
.slider {
  width: 87px;
  display: flex;
  flex-direction: column;
  gap: 2px;
  margin-left: 2px;
  flex: none;
}
.track {
  height: 5px;
  background: #c4c4c4;
  position: relative;
}
.track.thin {
  height: 3px;
}
.thumb {
  position: absolute;
  left: 36px;
  top: 0;
  width: 15px;
  height: 5px;
  background: #e8e8e8;
  border-right: 1px solid #888;
  border-bottom: 1px solid #888;
  box-sizing: border-box;
}
.thumb.small {
  left: 0;
  width: 11px;
  height: 3px;
}
.bottombar .gear {
  margin-left: 1px;
}

/* result panel */
.panel {
  height: 84px;
  display: flex;
  flex: none;
  border-bottom: 1px solid #a8a8a8;
  box-sizing: border-box;
  padding-top: 2px;
  padding-left: 3px;
}
.col {
  display: flex;
  flex-direction: column;
  align-items: flex-start;
  flex: none;
}
.col1 { width: 108px; }
.col2 { width: 89px; }
.col3 { width: 75px; }
.col4 { width: 46px; }
.col5 {
  width: 87px;
  border-left: 1px solid #c4c4c4;
  padding-left: 2px;
  margin-top: 1px;
  height: 78px;
}
.lbl {
  height: 10px;
  line-height: 10px;
  flex: none;
}
.lblrow {
  display: flex;
  width: 100%;
  align-items: center;
  height: 10px;
}
.dotsbtn {
  margin-left: auto;
  margin-right: 6px;
  width: 8px;
  height: 8px;
  line-height: 4px;
  background: #e8e8e8;
  border-right: 1px solid #999;
  border-bottom: 1px solid #999;
  box-sizing: border-box;
  text-align: center;
  margin-top: -3px;
}
.off {
  color: #999;
}
.combo.off {
  background: #f0f0f0;
}
.drop {
  position: absolute;
  right: 0;
  top: 0;
  bottom: 0;
  width: 8px;
  background: #eee;
}
.drop::after {
  content: "";
  position: absolute;
  left: 1.5px;
  top: 3px;
  border: 2.5px solid transparent;
  border-top: 3px solid #222;
}
.drop.solo {
  width: 100%;
  background: none;
}
.drop.solo::after {
  left: 3px;
}
.col1 .combo {
  margin-left: 3px;
}
.c89 {
  width: 89px;
  margin-top: 1px;
}
.m4 {
  margin-top: 4px;
}
.c79 {
  width: 79px;
  margin-left: 4px;
  margin-top: 1px;
}
.c66 {
  width: 67px;
  margin-left: 3px;
  margin-top: 1px;
}
.c33 {
  width: 33px;
  margin-left: 2px;
  margin-top: 1px;
}
.layers {
  display: flex;
  align-items: center;
  margin-top: 5px;
  height: 10px;
  padding-left: 3px;
}
.col1 .layers .combo {
  margin-left: 7px;
  margin-right: 1px;
}
.c38 {
  width: 38px;
}
.check {
  display: flex;
  align-items: center;
  gap: 4px;
  height: 10px;
  white-space: nowrap;
}
.check i {
  width: 5px;
  height: 5px;
  border: 1px solid #999;
  background: #fff;
  display: block;
  font-style: normal;
  font-size: 6px;
  line-height: 5px;
  flex: none;
}
.check.off i {
  background: #e4e4e4;
}
.col1 .check {
  margin-left: 3px;
  margin-top: 4px;
}
.selrow {
  display: flex;
  margin-top: 1px;
  margin-left: 3px;
  height: 10px;
}
.selrow.sys {
  margin-top: 2px;
  margin-left: 4px;
  height: 11px;
}
.btn {
  display: flex;
  align-items: center;
  justify-content: center;
  background: #f0f0f0;
  border: 1px solid #e8e8e8;
  border-right-color: #6c6c6c;
  border-bottom-color: #6c6c6c;
  box-sizing: border-box;
  white-space: nowrap;
  flex: none;
  position: relative;
}
.sq11 {
  width: 12px;
}
.skip {
  font-size: 5px;
  color: #222;
}
.skip.faded {
  color: #888;
}
.yellow {
  background: #e8e86c;
  width: 56px;
}
.active {
  border: 1px solid #30c8d0;
  outline: 1px solid #777;
}
.sysbtn {
  width: 68px;
  color: #888;
}
.col2 .lbl.mt3 {
  margin-top: 3px;
}
.mt1 {
  margin-top: 1px;
}
.ind {
  margin-left: 5px;
  color: #999;
}
.ticked {
  color: #666;
}
.variation {
  display: flex;
  align-items: center;
  margin-top: 4px;
  margin-left: 3px;
  height: 10px;
  gap: 3px;
}
.num {
  width: 17px;
  height: 10px;
  line-height: 8px;
  border: 1px solid #aaa;
  background: #f4f4f4;
  box-sizing: border-box;
  text-align: right;
  padding-right: 3px;
  margin-left: 3px;
}
.optbtn {
  width: 58px;
  height: 12px;
  margin-left: 13px;
  margin-top: 4px;
  color: #999;
}
.numbox {
  width: 28px;
  height: 11px;
  border: 1px solid #a0a0a0;
  background: #f0f0f0;
  box-sizing: border-box;
  margin-left: 2px;
  margin-top: 3px;
}
.numbox + .numbox {
  margin-top: 2px;
}
.act {
  width: 39px;
  height: 11px;
  margin-left: 2px;
  margin-top: 5px;
}
.apply {
  margin-top: 2px;
  border: 1px solid #777;
}
.tabs {
  display: flex;
  height: 11px;
  gap: 3px;
  align-items: flex-end;
  padding-left: 2px;
}
.tabs .current {
  background: #fff;
  padding: 1px 2px;
}
.tabbody {
  width: 84px;
  height: 66px;
  border: 1px solid #e4e4e4;
  box-sizing: border-box;
  display: flex;
  flex-direction: column;
  padding: 0 0 0 3px;
}
.tabbody .check {
  margin: 1px 0 1px 3px;
}
.rb {
  width: 58px;
  height: 10px;
  margin-bottom: 0.5px;
}
.statusbar {
  height: 12px;
  line-height: 12px;
  padding-left: 2px;
  background: #f0f0f0;
  flex: none;
  color: #333;
}
</style>
